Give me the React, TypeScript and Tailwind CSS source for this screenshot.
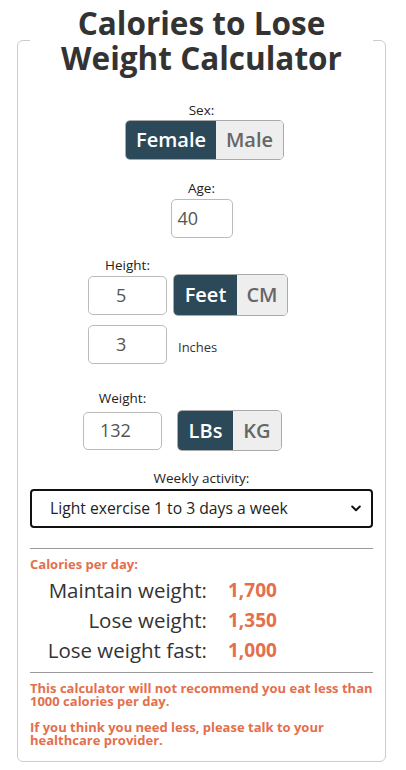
import React from "react";

const font = { fontFamily: '"Open Sans", "Noto Sans", sans-serif' };

function Toggle({
  items,
}: {
  items: { label: string; w: string; active?: boolean }[];
}) {
  return (
    <div className="flex rounded-[5px] border border-[#aaaaaa] overflow-hidden">
      {items.map((it) =>
        it.active ? (
          <div
            key={it.label}
            className={`${it.w} flex items-center justify-center bg-[#2c4959] text-white text-[20px] font-semibold`}
          >
            {it.label}
          </div>
        ) : (
          <div
            key={it.label}
            className={`${it.w} flex items-center justify-center bg-[#eeeeee] text-[#666666] text-[20px] font-semibold`}
          >
            {it.label}
          </div>
        )
      )}
    </div>
  );
}

export default function App() {
  return (
    <div className="w-[406px] min-h-[770px] bg-white pt-[5px]" style={font}>
      <fieldset className="ml-[17px] w-[369px] border border-[#cccccc] rounded-[6px] px-3 pb-[14px]">
        <legend className="w-full text-center text-[31.5px] leading-[35px] font-bold text-[#333333]">
          Calories to Lose Weight Calculator
        </legend>

        <div className="mt-[27px] text-center text-[13.5px] leading-4 text-[#222222]">Sex:</div>
        <div className="mt-[2px] flex justify-center pl-[6px]">
          <div className="h-[40px] flex">
            <Toggle
              items={[
                { label: "Female", w: "w-[90px]", active: true },
                { label: "Male", w: "w-[67px]" },
              ]}
            />
          </div>
        </div>

        <div className="mt-[20px] text-center text-[13.5px] leading-4 text-[#222222]">Age:</div>
        <div className="mt-[3px] flex justify-center">
          <div className="w-[62px] h-[39px] border border-[#bbbbbb] rounded-[5px] flex items-center pl-[6px] text-[18px] text-[#555555]">
            40
          </div>
        </div>

        <div className="mt-[19px] pl-[58px]">
          <div className="w-[79px] text-center text-[13.5px] leading-4 text-[#222222]">Height:</div>
          <div className="mt-[1px] flex items-center gap-[6px]">
            <div className="w-[79px] h-[39px] border border-[#bbbbbb] rounded-[5px] flex items-center pl-[27px] text-[18px] text-[#555555]">
              5
            </div>
            <div className="h-[42px] flex">
              <Toggle
                items={[
                  { label: "Feet", w: "w-[63px]", active: true },
                  { label: "CM", w: "w-[50px]" },
                ]}
              />
            </div>
          </div>
          <div className="mt-[9px] flex items-center gap-[11px]">
            <div className="w-[79px] h-[39px] border border-[#bbbbbb] rounded-[5px] flex items-center pl-[27px] text-[18px] text-[#555555]">
              3
            </div>
            <div className="pt-[7px] text-[13px] text-[#333333]">Inches</div>
          </div>
        </div>

        <div className="mt-[26px] pl-[53px]">
          <div className="w-[79px] text-center text-[13.5px] leading-4 text-[#222222]">Weight:</div>
          <div className="mt-[4px] flex items-center gap-[15px]">
            <div className="w-[79px] h-[38px] border border-[#bbbbbb] rounded-[5px] flex items-center pl-[16px] text-[18px] text-[#555555]">
              132
            </div>
            <div className="h-[41px] flex">
              <Toggle
                items={[
                  { label: "LBs", w: "w-[55px]", active: true },
                  { label: "KG", w: "w-[48px]" },
                ]}
              />
            </div>
          </div>
        </div>

        <div className="mt-[19px] text-center text-[13.5px] leading-4 text-[#222222]">Weekly activity:</div>
        <div className="mt-[3px] h-[39px] border-2 border-[#111111] rounded-[4px] flex items-center justify-between pl-[18px] pr-[10px] text-[15.7px] text-[#222222]">
          <span>Light exercise 1 to 3 days a week</span>
          <svg width="10" height="7" viewBox="0 0 10 7" fill="none">
            <polyline points="1.2,1.5 5,5.2 8.8,1.5" stroke="#111111" strokeWidth="2" strokeLinecap="round" strokeLinejoin="round" />
          </svg>
        </div>

        <div className="mt-[20px] border-t border-[#999999]" />
        <div className="mt-[7px] text-[13px] leading-4 font-bold text-[#e46f4c]">Calories per day:</div>
        <div className="mt-[3px] grid grid-cols-[177px_1fr] gap-x-[21px]">
          <div className="h-[30px] flex items-center justify-end text-[20.5px] text-[#333333]">Maintain weight:</div>
          <div className="h-[30px] flex items-center text-[19px] font-bold text-[#e46f4c]">1,700</div>
          <div className="h-[30px] flex items-center justify-end text-[20.5px] text-[#333333]">Lose weight:</div>
          <div className="h-[30px] flex items-center text-[19px] font-bold text-[#e46f4c]">1,350</div>
          <div className="h-[30px] flex items-center justify-end text-[20.5px] text-[#333333]">Lose weight fast:</div>
          <div className="h-[30px] flex items-center text-[19px] font-bold text-[#e46f4c]">1,000</div>
        </div>
        <div className="mt-[7px] border-t border-[#999999]" />
        <p className="mt-[9px] text-[13px] leading-[13px] font-bold text-[#e46f4c]">
          This calculator will not recommend you eat less than 1000 calories per day.
        </p>
        <p className="mt-[13px] text-[13px] leading-[13px] font-bold text-[#e46f4c] pr-[40px]">
          If you think you need less, please talk to your healthcare provider.
        </p>
      </fieldset>
    </div>
  );
}
